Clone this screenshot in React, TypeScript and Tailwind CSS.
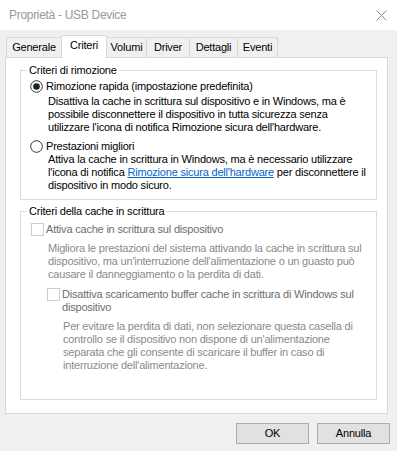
import React from "react";

const Radio = ({ checked }: { checked?: boolean }) => (
  <svg width="13" height="13" viewBox="0 0 13 13" className="shrink-0">
    <circle cx="6.5" cy="6.5" r="5.8" fill="#fff" stroke="#333" strokeWidth="1" />
    {checked && <circle cx="6.5" cy="6.5" r="3.3" fill="#222" />}
  </svg>
);

const Check = () => (
  <div className="w-[13px] h-[13px] shrink-0 border border-[#cccccc] bg-white" />
);

const Line = ({ children }: { children: React.ReactNode }) => (
  <div className="h-[13px] whitespace-nowrap">{children}</div>
);

const tabs = [
  { label: "Generale", w: "w-[56px]" },
  { label: "Criteri", w: "w-[46px]", sel: true },
  { label: "Volumi", w: "w-[41px]" },
  { label: "Driver", w: "w-[44px]" },
  { label: "Dettagli", w: "w-[49px]" },
  { label: "Eventi", w: "w-[41px]" },
];

export default function App() {
  return (
    <div className="w-[397px] h-[451px] bg-[#f0f0f0] overflow-hidden font-['Liberation_Sans',Arial,sans-serif] text-[11px] leading-[13px] tracking-[-0.2px] text-black">
      {/* Title bar */}
      <div className="h-[30px] bg-white flex items-center justify-between pl-[9px] pr-[10px]">
        <span className="text-[12px] text-[#999999] leading-[16px] tracking-[-0.3px]">Proprietà - USB Device</span>
        <svg width="11" height="11" viewBox="0 0 11 11">
          <path d="M0.5 0.5 L10.5 10.5 M10.5 0.5 L0.5 10.5" stroke="#8a8a8a" strokeWidth="1" />
        </svg>
      </div>

      {/* Tabs */}
      <div className="h-[27px] flex items-end pl-[6px]">
        {tabs.map((t, i) =>
          t.sel ? (
            <div
              key={t.label}
              className={`${t.w} ${i > 0 ? "-ml-px" : ""} h-[23px] -mb-px relative z-10 bg-white border-l border-t border-r border-[#d9d9d9] flex justify-center pt-[3px]`}
            >
              {t.label}
            </div>
          ) : (
            <div
              key={t.label}
              className={`${t.w} ${i > 0 ? "-ml-px" : ""} h-[20px] bg-[#f0f0f0] border-l border-t border-r border-[#d9d9d9] flex items-center justify-center`}
            >
              {t.label}
            </div>
          )
        )}
      </div>

      {/* Panel */}
      <div className="ml-[5px] w-[383px] h-[357px] bg-white border border-[#d9d9d9] pt-[6px]">
        <fieldset className="ml-[14px] w-[357px] h-[136px] border border-[#dcdcdc] pl-[9px] pt-[3px]">
          <legend className="-ml-[3px] px-[2px] h-[13px]">Criteri di rimozione</legend>
          <div className="flex items-center h-[13px]">
            <Radio checked />
            <span className="ml-[3px] whitespace-nowrap">Rimozione rapida (impostazione predefinita)</span>
          </div>
          <div className="ml-[18px] mt-[2px]">
            <Line>Disattiva la cache in scrittura sul dispositivo e in Windows, ma è</Line>
            <Line>possibile disconnettere il dispositivo in tutta sicurezza senza</Line>
            <Line>utilizzare l'icona di notifica Rimozione sicura dell'hardware.</Line>
          </div>
          <div className="flex items-center h-[13px] mt-[6px]">
            <Radio />
            <span className="ml-[3px] whitespace-nowrap">Prestazioni migliori</span>
          </div>
          <div className="ml-[18px]">
            <Line>Attiva la cache in scrittura in Windows, ma è necessario utilizzare</Line>
            <Line>
              l'icona di notifica{" "}
              <span className="text-[#0066cc] underline">Rimozione sicura dell'hardware</span> per disconnettere il
            </Line>
            <Line>dispositivo in modo sicuro.</Line>
          </div>
        </fieldset>

        <fieldset className="mt-[5px] ml-[14px] w-[357px] h-[195px] border border-[#dcdcdc] pl-[10px] pt-[5px]">
          <legend className="-ml-[4px] px-[2px] h-[13px]">Criteri della cache in scrittura</legend>
          <div className="flex items-center h-[13px]">
            <Check />
            <span className="ml-[2px] whitespace-nowrap text-[#6d6d6d]">Attiva cache in scrittura sul dispositivo</span>
          </div>
          <div className="ml-[17px] mt-[6px] text-[#8a8a8a]">
            <Line>Migliora le prestazioni del sistema attivando la cache in scrittura sul</Line>
            <Line>dispositivo, ma un'interruzione dell'alimentazione o un guasto può</Line>
            <Line>causare il danneggiamento o la perdita di dati.</Line>
          </div>
          <div className="flex items-start ml-[16px] mt-[7px]">
            <Check />
            <div className="ml-[2px] text-[#6d6d6d]">
              <Line>Disattiva scaricamento buffer cache in scrittura di Windows sul</Line>
              <Line>dispositivo</Line>
            </div>
          </div>
          <div className="ml-[32px] mt-[6px] text-[#8a8a8a]">
            <Line>Per evitare la perdita di dati, non selezionare questa casella di</Line>
            <Line>controllo se il dispositivo non dispone di un'alimentazione</Line>
            <Line>separata che gli consente di scaricare il buffer in caso di</Line>
            <Line>interruzione dell'alimentazione.</Line>
          </div>
        </fieldset>
      </div>

      {/* Buttons */}
      <div className="flex justify-end gap-[8px] pr-[7px] mt-[9px]">
        <button className="w-[73px] h-[21px] bg-[#e1e1e1] border border-[#adadad] flex items-center justify-center">OK</button>
        <button className="w-[73px] h-[21px] bg-[#e1e1e1] border border-[#adadad] flex items-center justify-center">Annulla</button>
      </div>
    </div>
  );
}
